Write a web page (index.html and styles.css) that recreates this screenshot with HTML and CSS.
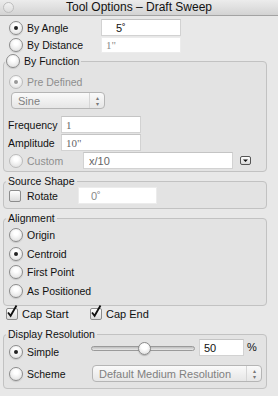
FILE: index.html
```html
<!DOCTYPE html>
<html lang="en">
<head>
    <meta charset="UTF-8">
    <title>Tool Options - Draft Sweep</title>
    <link rel="stylesheet" href="styles.css">
</head>
<body>
    <div class="window">
        <div class="titlebar">
            <span class="close"></span>
            <span class="title">Tool Options – Draft Sweep</span>
        </div>

        <div class="panel">
            <div class="row">
                <label class="opt w-mode"><span class="radio on"></span>By Angle</label>
                <input class="field f-angle" type="text" value="5˚">
            </div>
            <div class="row">
                <label class="opt w-mode"><span class="radio"></span>By Distance</label>
                <input class="field f-dist" type="text" value='1"'>
            </div>

            <fieldset class="group g-func">
                <legend class="legend-opt"><span class="radio"></span>By Function</legend>
                <div class="row row-pre">
                    <label class="opt dim"><span class="radio on off"></span>Pre Defined</label>
                </div>
                <div class="select s-sine">
                    <span class="select-text">Sine</span>
                    <span class="arrows">▴<br>▾</span>
                </div>
                <div class="row row-freq">
                    <label class="lbl w-num">Frequency</label>
                    <input class="field f-num" type="text" value="1">
                </div>
                <div class="row">
                    <label class="lbl w-num">Amplitude</label>
                    <input class="field f-num" type="text" value='10"'>
                </div>
                <div class="row">
                    <label class="opt dim w-custom"><span class="radio off"></span>Custom</label>
                    <input class="field f-custom" type="text" value="x/10">
                    <span class="popup-btn">
                        <svg width="9" height="7" viewBox="0 0 9 7"><path d="M2 2.5h5L4.5 5z" fill="#111"/></svg>
                    </span>
                </div>
            </fieldset>

            <fieldset class="group g-source">
                <legend>Source Shape</legend>
                <div class="row">
                    <label class="opt w-rotate"><span class="check"></span>Rotate</label>
                    <input class="field f-rotate" type="text" value="0˚">
                </div>
            </fieldset>

            <fieldset class="group g-align">
                <legend>Alignment</legend>
                <div class="row"><label class="opt"><span class="radio"></span>Origin</label></div>
                <div class="row"><label class="opt"><span class="radio on"></span>Centroid</label></div>
                <div class="row"><label class="opt"><span class="radio"></span>First Point</label></div>
                <div class="row"><label class="opt"><span class="radio"></span>As Positioned</label></div>
            </fieldset>

            <div class="row row-caps">
                <label class="opt w-cap">
                    <span class="check on"><svg width="14" height="15" viewBox="0 0 14 15"><path d="M3 8.5l2.6 3.3L11.5 1.5" fill="none" stroke="#111" stroke-width="1.8"/></svg></span>Cap Start
                </label>
                <label class="opt">
                    <span class="check on"><svg width="14" height="15" viewBox="0 0 14 15"><path d="M3 8.5l2.6 3.3L11.5 1.5" fill="none" stroke="#111" stroke-width="1.8"/></svg></span>Cap End
                </label>
            </div>

            <fieldset class="group g-res">
                <legend>Display Resolution</legend>
                <div class="row">
                    <label class="opt w-res"><span class="radio on"></span>Simple</label>
                    <div class="slider"><span class="thumb"></span></div>
                    <input class="field f-pct" type="text" value="50">
                    <span class="pct">%</span>
                </div>
                <div class="row">
                    <label class="opt w-res"><span class="radio"></span>Scheme</label>
                    <div class="select s-scheme">
                        <span class="select-text">Default Medium Resolution</span>
                        <span class="arrows">▴<br>▾</span>
                    </div>
                </div>
            </fieldset>
        </div>
    </div>
</body>
</html>
```

FILE: styles.css
```css
* { box-sizing: border-box; }

body {
    margin: 0;
    width: 278px;
    height: 396px;
    overflow: hidden;
    background: #e8e8e8;
    font-family: "Liberation Sans", Arial, sans-serif;
    font-size: 10.5px;
    color: #111;
}

.window { height: 396px; }

/* title bar */
.titlebar {
    position: relative;
    height: 16px;
    background: linear-gradient(#ececec, #d3d3d3);
    border-bottom: 1px solid #a3a3a3;
    text-align: center;
}
.title { font-size: 12px; line-height: 15px; color: #111; }
.close {
    position: absolute;
    left: 3px;
    top: 2px;
    width: 11px;
    height: 11px;
    border-radius: 50%;
    border: 1px solid #bdbdbd;
    background: linear-gradient(#f2f2f2, #dcdcdc);
}

.panel { padding: 3px 0 0 0; }

.row { display: flex; align-items: center; height: 17px; padding-left: 9px; }
.group .row { padding-left: 5px; }
.opt, .lbl { display: flex; align-items: center; white-space: nowrap; flex: none; }
.dim { color: #8e8e8e; }

.w-mode { width: 92px; }
.w-num { width: 53px; margin-left: -1px; }
.w-custom { width: 74px; }
.w-rotate { width: 69px; }
.w-cap { width: 84px; }
.w-res { width: 78px; }

/* radio / check */
.radio {
    position: relative;
    flex: none;
    width: 14px;
    height: 14px;
    margin-right: 4px;
    border-radius: 50%;
    border: 1px solid #8c8c8c;
    background: radial-gradient(circle at 50% 35%, #ffffff 20%, #d9d9d9 100%);
    box-shadow: 0 1px 1px rgba(0,0,0,0.12);
}
.radio.on::after {
    content: "";
    position: absolute;
    left: 4px;
    top: 4px;
    width: 4px;
    height: 4px;
    border-radius: 50%;
    background: #222;
}
.radio.off { border-color: #bcbcbc; box-shadow: none; }
.radio.off::after { background: #999; }

.check {
    position: relative;
    flex: none;
    width: 12px;
    height: 12px;
    margin-right: 6px;
    border-radius: 2px;
    border: 1px solid #8c8c8c;
    background: linear-gradient(#ffffff, #dcdcdc);
}
.check svg { position: absolute; left: -2px; top: -5px; }

/* text fields */
.field {
    flex: none;
    height: 17px;
    margin: 0;
    padding: 0 4px;
    border: 1px solid #d2d2d2;
    border-top-color: #c4c4c4;
    background: #fff;
    font-family: "Liberation Sans", Arial, sans-serif;
    font-size: 11px;
    color: #111;
    outline: none;
}
.f-angle { width: 80px; padding-left: 14px; }
.f-dist { width: 80px; height: 16px; color: #888; font-family: "Liberation Serif", serif; border-color: #ececec; }
.f-num { width: 80px; color: #666; font-family: "Liberation Serif", serif; }
.f-custom { width: 150px; color: #666; padding-left: 5px; }
.f-rotate { width: 79px; padding-left: 12px; color: #888; border-color: #ececec; }
.f-pct { width: 45px; padding-left: 4px; }

.popup-btn {
    display: flex;
    align-items: center;
    justify-content: center;
    width: 11px;
    height: 9px;
    margin-left: 7px;
    border: 1px solid #555;
    border-radius: 2px;
    background: linear-gradient(#fff, #d8d8d8);
}

/* groups */
.group {
    width: 264px;
    margin: 0 0 0 3px;
    padding: 0 4px 0 0;
    border: 1px solid #c2c2c2;
    border-radius: 4px;
    background: #e3e3e3;
}
.group legend {
    margin-left: 2px;
    padding: 0 2px 0 2px;
    line-height: 13px;
    font-size: 10.5px;
}
.group .legend-opt {
    display: flex;
    align-items: center;
    margin-left: 1px;
    padding: 0 2px 0 1px;
}

.g-func { margin-top: 1px; padding-bottom: 2px; }
.row-pre { height: 18px; margin-top: 5px; }
.s-sine { width: 94px; margin: 1px 0 0 7px; }
.row-freq { margin-top: 7px; }
.g-func .row + .row { margin-top: 1px; }

.g-source { margin-top: 3px; padding-bottom: 4px; }
.g-source .row { margin-top: -1px; }

.g-align { margin-top: 3px; padding-bottom: 5px; }
.g-align .row { height: 18.5px; }
.g-align .row:first-of-type { margin-top: 1px; }

.row-caps { height: 16px; padding-left: 6px; margin-top: -0.5px; }
.row-caps .opt { font-size: 11px; }
.row-caps .check { margin-right: 4px; }

.g-res { margin-top: 6px; padding-bottom: 3px; }
.g-res .row { height: 22px; }
.g-res .row:first-of-type { margin-top: 0; }

/* popup menus */
.select {
    position: relative;
    display: flex;
    align-items: center;
    height: 17px;
    border: 1px solid #b5b5b5;
    border-radius: 4px;
    background: linear-gradient(#fafafa, #e6e6e6);
    color: #808080;
}
.select-text { padding-left: 6px; font-size: 11px; }
.select .arrows {
    position: absolute;
    right: 0;
    top: 0;
    bottom: 0;
    width: 15px;
    border-left: 1px solid #d6d6d6;
    font-size: 6px;
    line-height: 6px;
    padding-top: 2px;
    text-align: center;
    color: #777;
}
.s-scheme { width: 170px; margin-left: 5px; }

/* slider */
.slider {
    position: relative;
    flex: none;
    width: 104px;
    height: 5px;
    margin-top: -6px;
    margin-left: 4px;
    border-radius: 3px;
    border: 1px solid #9a9a9a;
    background: linear-gradient(#bdbdbd, #e9e9e9);
}
.thumb {
    position: absolute;
    left: 46px;
    top: -5px;
    width: 13px;
    height: 13px;
    border-radius: 50%;
    border: 1px solid #8a8a8a;
    background: radial-gradient(circle at 50% 35%, #fff 30%, #d6d6d6 100%);
    box-shadow: 0 1px 1px rgba(0,0,0,0.2);
}
.f-pct { margin-left: 4px; margin-top: -8px; }
.pct { margin-left: 3px; margin-top: -10px; font-size: 11px; }
```
